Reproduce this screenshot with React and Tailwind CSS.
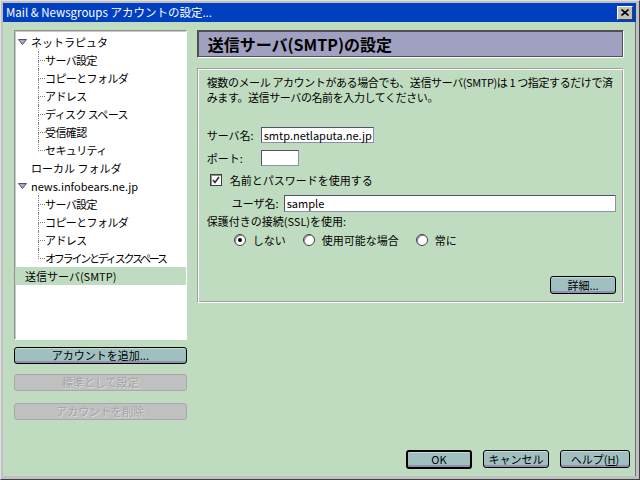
import clsx from "clsx";

const tree = [
  {
    label: "ネットラピュタ",
    open: true,
    children: [
      "サーバ設定",
      "コピーとフォルダ",
      "アドレス",
      "ディスク スペース",
      "受信確認",
      "セキュリティ",
    ],
  },
  { label: "ローカル フォルダ" },
  {
    label: "news.infobears.ne.jp",
    open: true,
    children: ["サーバ設定", "コピーとフォルダ", "アドレス", "オフラインとディスクスペース"],
  },
  { label: "送信サーバ(SMTP)", selected: true, flat: true },
];

function Twisty() {
  return (
    <svg viewBox="0 0 9 6" className="h-[6px] w-[9px] shrink-0">
      <path d="M0.5 0.5 H8.5 L4.5 5.5 Z" fill="#a8a8c8" stroke="#505070" strokeWidth="1" />
    </svg>
  );
}

function Btn({ children, className, disabled, primary }) {
  return (
    <button
      type="button"
      className={clsx(
        "flex items-center justify-center rounded-[3px] text-[11px] leading-none",
        disabled
          ? "border border-[#a8a8a8] bg-[#c0c0c0] text-[#a4a4a4] [text-shadow:1px_1px_0_#dcdcdc]"
          : "bg-[#a0c0c0] text-black shadow-[inset_0_-2px_0_#9090b0,inset_0_1px_0_#c4dcdc]",
        !disabled && (primary ? "border-2 border-black" : "border border-black"),
        className
      )}
    >
      {children}
    </button>
  );
}

function Field({ value, className }) {
  return (
    <div
      className={clsx(
        "flex items-center border border-[#505070] border-r-[#9090a8] border-b-[#9090a8] bg-white pl-[2px] text-[11px] leading-none",
        className
      )}
    >
      {value}
    </div>
  );
}

function Radio({ checked, label }) {
  return (
    <div className="flex items-center gap-[7px]">
      <span className="flex h-[12px] w-[12px] items-center justify-center rounded-full border border-[#404040] bg-white shadow-[inset_1px_1px_0_#909090]">
        {checked && <span className="h-[4px] w-[4px] rounded-full bg-black" />}
      </span>
      <span>{label}</span>
    </div>
  );
}

export default function App() {
  return (
    <div className="flex h-[480px] w-[640px] flex-col border border-t-[#e0e0e0] border-l-[#e0e0e0] border-r-[#404040] border-b-[#404040] bg-[#c0c0c0] p-[2px] pr-[3px] pb-[3px] font-['Noto_Sans_CJK_JP','Liberation_Sans',sans-serif] text-[11px] text-black">
      <div className="flex h-[19px] shrink-0 items-center justify-between bg-[#0040c0] pl-[3px] pr-[3px]">
        <span className="text-[11.5px] leading-none text-white">Mail &amp; Newsgroups アカウントの設定...</span>
        <span className="flex h-[14px] w-[16px] items-center justify-center border border-t-white border-l-white border-r-[#404040] border-b-[#404040] bg-[#c0c0c0]">
          <svg viewBox="0 0 8 7" className="h-[7px] w-[8px]">
            <path d="M0.5 0.5 L7.5 6.5 M7.5 0.5 L0.5 6.5" stroke="black" strokeWidth="1.6" />
          </svg>
        </span>
      </div>

      <div className="flex flex-1 flex-col border-r border-r-[#707070] bg-[#c0dcc0] px-[11px] pt-[8px] pb-[7px]">
        <div className="flex gap-[10px]">
          <div className="flex w-[173px] flex-col">
            <div className="h-[310px] overflow-hidden border border-t-[#909090] border-l-[#909090] border-r-white border-b-white bg-white pt-[2px] shadow-[inset_1px_1px_0_#c8c8c8]">
              {tree.map((node) => (
                <div key={node.label}>
                  <div
                    className={clsx(
                      "flex h-[18px] items-center whitespace-nowrap pl-[3px]",
                      node.selected && "bg-[#c0dcc0]"
                    )}
                  >
                    {node.flat ? (
                      <span className="w-[3px]" />
                    ) : node.children ? (
                      <Twisty />
                    ) : (
                      <span className="w-[9px]" />
                    )}
                    <span className="ml-[4px]">{node.label}</span>
                  </div>
                  {node.children && (
                    <div className="pl-[23px]">
                      {node.children.map((c, i) => (
                        <div key={c} className="flex h-[18px] items-stretch whitespace-nowrap">
                          <span className="flex w-[7px] flex-col">
                            <span className="flex-1 border-b border-l border-dotted border-[#808080]" />
                            <span
                              className={clsx(
                                "flex-1",
                                i < node.children.length - 1 && "border-l border-dotted border-[#808080]"
                              )}
                            />
                          </span>
                          <span
                            className={clsx(
                              "flex items-center",
                              c.length > 10 ? "tracking-[-2.2px]" : "tracking-[-0.6px]"
                            )}
                          >
                            {c}
                          </span>
                        </div>
                      ))}
                    </div>
                  )}
                </div>
              ))}
            </div>
            <Btn className="mt-[7px] h-[17px]">アカウントを追加...</Btn>
            <Btn disabled className="mt-[10px] h-[17px]">
              標準として設定
            </Btn>
            <Btn disabled className="mt-[12px] h-[17px]">
              アカウントを削除
            </Btn>
          </div>

          <div className="flex w-[428px] flex-col">
            <div className="flex h-[28px] items-center border border-t-[#505050] border-l-[#505050] border-r-white border-b-white bg-[#a0a0c0] pl-[10px] text-[16px] font-bold leading-none shadow-[inset_1px_1px_0_#505050,inset_-1px_-1px_0_#505050]">
              送信サーバ(SMTP)の設定
            </div>
            <div className="mt-[10px] flex h-[235px] flex-col border border-t-[#a0a0a0] border-l-[#a0a0a0] border-r-white border-b-white pt-[6px] pr-[7px] pl-[9px] shadow-[inset_1px_1px_0_#ffffff,inset_-1px_-1px_0_#a0a0a0]">
              <p className="whitespace-nowrap leading-[15px] tracking-[-0.4px]">
                複数のメール アカウントがある場合でも、送信サーバ(SMTP)は 1 つ指定するだけで済
                <br />
                みます。送信サーバの名前を入力してください。
              </p>
              <div className="mt-[22px] flex items-center">
                <span className="w-[54px]">サーバ名:</span>
                <Field value="smtp.netlaputa.ne.jp" className="h-[16px] w-[113px]" />
              </div>
              <div className="mt-[6px] flex items-center">
                <span className="w-[54px]">ポート:</span>
                <Field value="" className="h-[16px] w-[38px]" />
              </div>
              <div className="mt-[7px] flex h-[14px] items-center">
                <span className="ml-[3px] flex h-[12px] w-[12px] items-center justify-center border border-[#404040] bg-white shadow-[inset_1px_1px_0_#909090]">
                  <svg viewBox="0 0 8 8" className="h-[8px] w-[8px]">
                    <path d="M1 4 L3 6.5 L7 1" fill="none" stroke="#303030" strokeWidth="1.6" />
                  </svg>
                </span>
                <span className="ml-[8px]">名前とパスワードを使用する</span>
              </div>
              <div className="mt-[8px] flex items-center">
                <span className="ml-[25px] w-[52px]">ユーザ名:</span>
                <Field value="sample" className="h-[17px] flex-1" />
              </div>
              <div className="mt-[2px] leading-[14px]">保護付きの接続(SSL)を使用:</div>
              <div className="mt-[5px] ml-[27px] flex h-[14px] items-center gap-[17px]">
                <Radio checked label="しない" />
                <Radio label="使用可能な場合" />
                <Radio label="常に" />
              </div>
              <div className="mt-[29px] flex justify-end">
                <Btn className="h-[18px] w-[66px]">詳細...</Btn>
              </div>
            </div>
          </div>
        </div>

        <div className="-mr-[6px] mt-auto flex justify-end gap-[11px]">
          <Btn primary className="h-[19px] w-[66px]">
            OK
          </Btn>
          <Btn className="h-[18px] w-[66px]">キャンセル</Btn>
          <Btn className="h-[18px] w-[70px]">
            ヘルプ(<span className="underline">H</span>)
          </Btn>
        </div>
      </div>
    </div>
  );
}
